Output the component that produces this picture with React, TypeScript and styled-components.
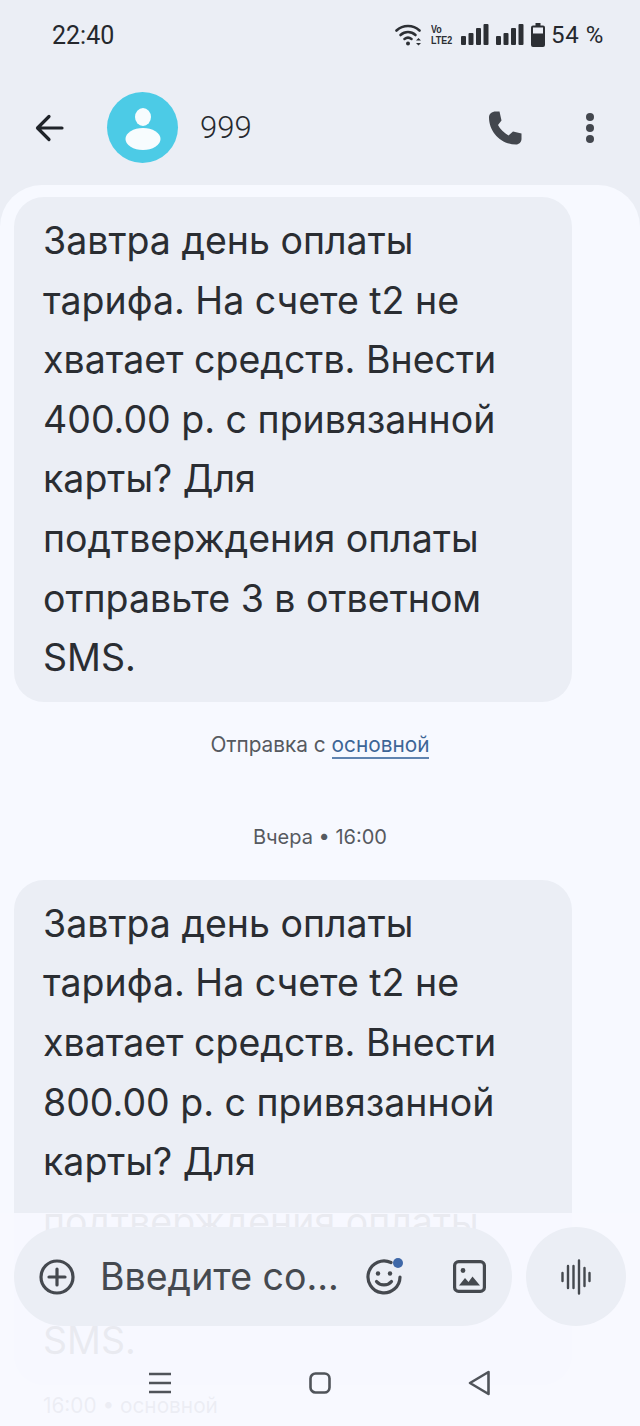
import React from "react";
import styled, { createGlobalStyle } from "styled-components";

const Global = createGlobalStyle`
  html, body { margin: 0; padding: 0; background: #ebeef5; }
  * { box-sizing: border-box; }
`;

const Page = styled.div`
  position: relative;
  width: 640px;
  height: 1426px;
  overflow: hidden;
  background: #ebeef5;
  font-family: Inter, Roboto, "Noto Sans", sans-serif;
  color: #1f2329;
  display: flex;
  flex-direction: column;
`;

const StatusBar = styled.div`
  height: 70px;
  padding: 0 36px 0 52px;
  display: flex;
  align-items: center;
  justify-content: space-between;
  font-family: Roboto, sans-serif;
  font-size: 25px;
  color: #25282d;
`;

const StatusIcons = styled.div`
  display: flex;
  align-items: center;
  gap: 7px;
  font-size: 24px;
`;

const NetLabel = styled.div`
  font-family: "Liberation Sans", sans-serif;
  font-size: 11.5px;
  line-height: 11px;
  font-weight: 700;
  width: 27px;
  color: #2c2f34;
  transform: scaleX(0.78);
  transform-origin: left center;
  margin: 0 -4px 0 1px;
  white-space: nowrap;
`;

const Percent = styled.span`
  margin-left: -1px;
  letter-spacing: 0.6px;
`;

const Header = styled.div`
  height: 115px;
  display: flex;
  align-items: center;
  padding: 0 46px 0 34px;
`;

const Avatar = styled.div`
  width: 71px;
  height: 71px;
  border-radius: 50%;
  background: #4ccbe6;
  margin-left: 41px;
  display: flex;
  align-items: center;
  justify-content: center;
`;

const Title = styled.div`
  font-family: Roboto, sans-serif;
  font-size: 31px;
  font-weight: 300;
  margin-left: 22px;
  flex: 1;
  color: #26292e;
`;

const HeaderActions = styled.div`
  display: flex;
  align-items: center;
  gap: 64px;
`;

const Sheet = styled.div`
  flex: 1;
  background: #f7f9ff;
  border-radius: 42px 42px 0 0;
  padding: 12px 68px 0 14px;
  display: flex;
  flex-direction: column;
`;

const Bubble = styled.div<{ $top?: number }>`
  background: #ebeef5;
  border-radius: 30px;
  margin-top: ${(p) => p.$top ?? 0}px;
  padding: 14px 20px 14px 29px;
  font-size: 37.5px;
  line-height: 59.6px;
  color: #2a2d32;
  flex-shrink: 0;
`;

const Line = styled.div`
  white-space: nowrap;
`;

const Meta = styled.div<{ $top: number; $size: number }>`
  margin-top: ${(p) => p.$top}px;
  margin-right: -54px;
  text-align: center;
  font-size: ${(p) => p.$size}px;
  line-height: 26px;
  color: #565a60;
  flex-shrink: 0;
`;

const SimLink = styled.span`
  color: #3d6596;
  border-bottom: 2px solid #5f83b0;
`;

const BubbleMeta = styled.div`
  margin: 8px 0 0 29px;
  font-size: 20.8px;
  line-height: 26px;
  color: #565a60;
  white-space: nowrap;
`;

const Overlay = styled.div`
  position: absolute;
  left: 0;
  right: 0;
  top: 1213px;
  bottom: 0;
  background: rgba(247, 249, 255, 0.93);
  padding: 14px 14px 0;
  display: flex;
  flex-direction: column;
`;

const ComposeRow = styled.div`
  display: flex;
  gap: 14px;
  height: 99px;
`;

const ComposeField = styled.div`
  width: 498px;
  background: #ebeef5;
  border-radius: 50px;
  display: flex;
  align-items: center;
  padding: 0 26px 0 25px;
`;

const Placeholder = styled.div`
  font-size: 37.5px;
  color: #45494f;
  margin-left: 25px;
  flex: 1;
  white-space: nowrap;
`;

const Smile = styled.div`
  position: relative;
  display: flex;
  margin-right: 51px;
`;

const Dot = styled.div`
  position: absolute;
  top: -1px;
  right: -1px;
  width: 10px;
  height: 10px;
  border-radius: 50%;
  background: #3f68a8;
`;

const MicButton = styled.div`
  width: 100px;
  height: 99px;
  border-radius: 50%;
  background: #ebeef5;
  display: flex;
  align-items: center;
  justify-content: center;
`;

const NavBar = styled.div`
  margin: 44px 0 0;
  padding: 0 136px 0 135px;
  display: flex;
  align-items: center;
  justify-content: space-between;
`;

const first = [
  "Завтра день оплаты",
  "тарифа. На счете t2 не",
  "хватает средств. Внести",
  "400.00 р. с привязанной",
  "карты? Для",
  "подтверждения оплаты",
  "отправьте 3 в ответном",
  "SMS.",
];
const second = [
  "Завтра день оплаты",
  "тарифа. На счете t2 не",
  "хватает средств. Внести",
  "800.00 р. с привязанной",
  "карты? Для",
  "подтверждения оплаты",
  "отправьте 3 в ответном",
  "SMS.",
];

const Signal = () => (
  <svg width="28" height="22" viewBox="0 0 28 22" fill="#2c2f34">
    <rect x="0" y="12" width="5" height="9" rx="1" />
    <rect x="7.500" y="9" width="5" height="12" rx="1" />
    <rect x="15" y="4" width="5" height="17" rx="1" />
    <rect x="22.500" y="0" width="5" height="21" rx="1" />
  </svg>
);

export default function App() {
  return (
    <Page>
      <Global />
      <StatusBar>
        <span>22:40</span>
        <StatusIcons>
          <svg width="28" height="24" viewBox="0 0 28 24" fill="none" stroke="#2c2f34" strokeWidth="2.600" strokeLinecap="round">
            <path d="M1.500 7.500C8 1.500 18 1.500 24.500 7.500" />
            <path d="M5.500 12C10 8 16 8 20.500 12" />
            <path d="M9.500 16C11.500 14.500 14.500 14.500 16.500 16" />
            <circle cx="13" cy="20.500" r="2" fill="#2c2f34" stroke="none" />
            <path d="M21 17.500l2.500-2.500 2.500 2.500zM21 20l2.500 2.500 2.500-2.500z" fill="#2c2f34" stroke="none" />
          </svg>
          <NetLabel>
            Vo
            <br />
            LTE2
          </NetLabel>
          <Signal />
          <Signal />
          <svg width="14" height="24" viewBox="0 0 14 24" fill="#2c2f34">
            <path d="M4.500 0h5v2.500h2.500a2 2 0 0 1 2 2V22a2 2 0 0 1-2 2H2a2 2 0 0 1-2-2V4.500a2 2 0 0 1 2-2h2.500z" />
            <rect x="2" y="4.500" width="10" height="6" fill="#ebeef5" />
          </svg>
          <Percent>54 %</Percent>
        </StatusIcons>
      </StatusBar>
      <Header>
        <svg width="32" height="32" viewBox="0 0 32 32" fill="none" stroke="#1f2329" strokeWidth="3.200" strokeLinecap="round" strokeLinejoin="round">
          <path d="M28 16H4M15 4.500L3.500 16 15 27.500" />
        </svg>
        <Avatar>
          <svg width="40" height="46" viewBox="0 0 40 46" fill="#f7fcfe">
            <ellipse cx="20" cy="12" rx="8" ry="9" />
            <ellipse cx="20" cy="34" rx="17.500" ry="11" />
          </svg>
        </Avatar>
        <Title>999</Title>
        <HeaderActions>
          <svg width="34" height="34" viewBox="0 0 34 34" fill="#43474e">
            <path d="M8 0.500C3.500 0.500 1 3 1 6.500 1 21 13 33.500 28 33.500 31 33.500 33.500 31 33.500 28V22.500L25 20.500 20.500 24.500C16 22 12 18 10 14L13.500 9.500 11.500 0.500z" />
          </svg>
          <svg width="8" height="30" viewBox="0 0 8 30" fill="#43474e">
            <circle cx="4" cy="4" r="4" />
            <circle cx="4" cy="15" r="4" />
            <circle cx="4" cy="26" r="4" />
          </svg>
        </HeaderActions>
      </Header>
      <Sheet>
        <Bubble>
          {first.map((l) => (
            <Line key={l}>{l}</Line>
          ))}
        </Bubble>
        <Meta $top={30} $size={20.8}>
          Отправка с <SimLink>основной</SimLink>
        </Meta>
        <Meta $top={66} $size={20}>Вчера • 16:00</Meta>
        <Bubble $top={30}>
          {second.map((l) => (
            <Line key={l}>{l}</Line>
          ))}
        </Bubble>
        <BubbleMeta>16:00 • основной</BubbleMeta>
      </Sheet>
      <Overlay>
        <ComposeRow>
          <ComposeField>
            <svg width="36" height="36" viewBox="0 0 36 36" fill="none" stroke="#45494f" strokeWidth="3.200" strokeLinecap="round">
              <circle cx="18" cy="18" r="16" />
              <path d="M18 10v16M10 18h16" />
            </svg>
            <Placeholder>Введите со...</Placeholder>
            <Smile>
              <svg width="36" height="36" viewBox="0 0 36 36" fill="none" stroke="#45494f" strokeWidth="3.200" strokeLinecap="round">
                <path d="M25 3.500A16 16 0 1 0 34 18" />
                <circle cx="12" cy="14.500" r="2.200" fill="#45494f" stroke="none" />
                <circle cx="24" cy="14.500" r="2.200" fill="#45494f" stroke="none" />
                <path d="M10.500 22.500c3.500 4.500 11.500 4.500 15 0" />
              </svg>
              <Dot />
            </Smile>
            <svg width="33" height="33" viewBox="0 0 33 33" fill="none" stroke="#45494f" strokeWidth="3.200" strokeLinejoin="round">
              <rect x="1.600" y="1.600" width="29.800" height="29.800" rx="4" />
              <circle cx="10" cy="10.500" r="2.400" fill="#45494f" stroke="none" />
              <path d="M6 25.500l6-7.500 3.500 4 4-5.500 7.500 9z" fill="#45494f" stroke="none" />
            </svg>
          </ComposeField>
          <MicButton>
            <svg width="30" height="36" viewBox="0 0 30 36" fill="none" stroke="#45494f" strokeWidth="2.400" strokeLinecap="round">
              <path d="M1.500 14v8M7 7v22M12.500 7v22M18 1.500v33M23.500 9v18M28.500 14v8" />
            </svg>
          </MicButton>
        </ComposeRow>
        <NavBar>
          <svg width="22" height="22" viewBox="0 0 22 22" fill="none" stroke="#50545a" strokeWidth="2.600" strokeLinecap="butt">
            <path d="M0 2h22M0 11h22M0 20h22" />
          </svg>
          <svg width="22" height="22" viewBox="0 0 22 22" fill="none" stroke="#50545a" strokeWidth="2.600">
            <rect x="1.500" y="1.500" width="19" height="19" rx="5" />
          </svg>
          <svg width="22" height="26" viewBox="0 0 22 26" fill="none" stroke="#50545a" strokeWidth="2.600" strokeLinejoin="round">
            <path d="M20.500 2v22L2 13z" />
          </svg>
        </NavBar>
      </Overlay>
    </Page>
  );
}
